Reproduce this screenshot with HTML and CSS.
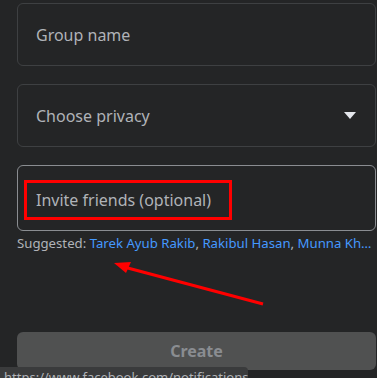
FILE: index.html
```html
<!DOCTYPE html>
<html lang="en">
<head>
  <meta charset="UTF-8" />
  <meta name="viewport" content="width=device-width, initial-scale=1.0"/>
  <title>Create group</title>
  <link rel="stylesheet" href="styles.css">
</head>
<body>
  <div class="panel">
    <form class="group-form">
      <div class="field">
        <span class="label">Group name</span>
      </div>
      <div class="field select">
        <span class="label">Choose privacy</span>
        <svg class="caret" width="12" height="8" viewBox="0 0 12 8"><path d="M0 0 H12 L6 7 Z" fill="#e4e6eb"/></svg>
      </div>
      <div class="field invite">
        <span class="label marked">Invite friends (optional)</span>
      </div>
      <p class="suggested">Suggested: <a href="#">Tarek Ayub Rakib</a>, <a href="#">Rakibul Hasan</a>, <a href="#">Munna Kh…</a></p>
      <button type="button" class="create" disabled>Create</button>
    </form>
  </div>

  <svg class="arrow" width="377" height="378" viewBox="0 0 377 378">
    <line x1="263" y1="304" x2="124" y2="267" stroke="#ff0000" stroke-width="3"/>
    <path d="M114 263 L131 262 L126 273 Z" fill="#ff0000"/>
  </svg>

  <div class="status">https://www.facebook.com/notifications/</div>
</body>
</html>
```

FILE: styles.css
```css
body {
  margin: 0;
  background-color: #242526;
  font-family: 'Noto Sans', 'Open Sans', sans-serif;
  overflow: hidden;
  height: 378px;
}

.panel {
  padding: 3px 0 0 17px;
}

.group-form {
  width: 359px;
  display: flex;
  flex-direction: column;
}

.field {
  box-sizing: border-box;
  height: 63px;
  border: 1px solid #3e4042;
  border-radius: 6px;
  margin-bottom: 18px;
  display: flex;
  align-items: center;
  justify-content: space-between;
  padding: 0 18px;
}

.label {
  color: #b0b3b8;
  font-size: 16px;
}

.caret {
  margin-right: 1px;
}

.field.invite {
  height: 66px;
  border-color: #8a8d91;
  margin-bottom: 0;
  padding-left: 6px;
}

.marked {
  border: 3px solid #ff0000;
  padding: 6px 18px 6px 9px;
  margin-top: 3px;
}

.suggested {
  margin: 3px 0 0;
  font-size: 13.2px;
  color: #b0b3b8;
  white-space: nowrap;
}

.suggested a {
  color: #4599ff;
  text-decoration: none;
}

.create {
  margin-top: 80px;
  height: 38px;
  border: none;
  border-radius: 6px;
  background-color: #505151;
  color: #8a8d91;
  font-family: inherit;
  font-size: 16px;
  font-weight: bold;
}

.arrow {
  position: absolute;
  top: 0;
  left: 0;
  pointer-events: none;
}

.status {
  position: absolute;
  left: 0;
  top: 367px;
  width: 244px;
  height: 11px;
  padding-left: 4px;
  background-color: #3a3b3c;
  border-top-right-radius: 4px;
  color: #b0b3b8;
  font-size: 13px;
  line-height: 20px;
  overflow: hidden;
  white-space: nowrap;
}
```
